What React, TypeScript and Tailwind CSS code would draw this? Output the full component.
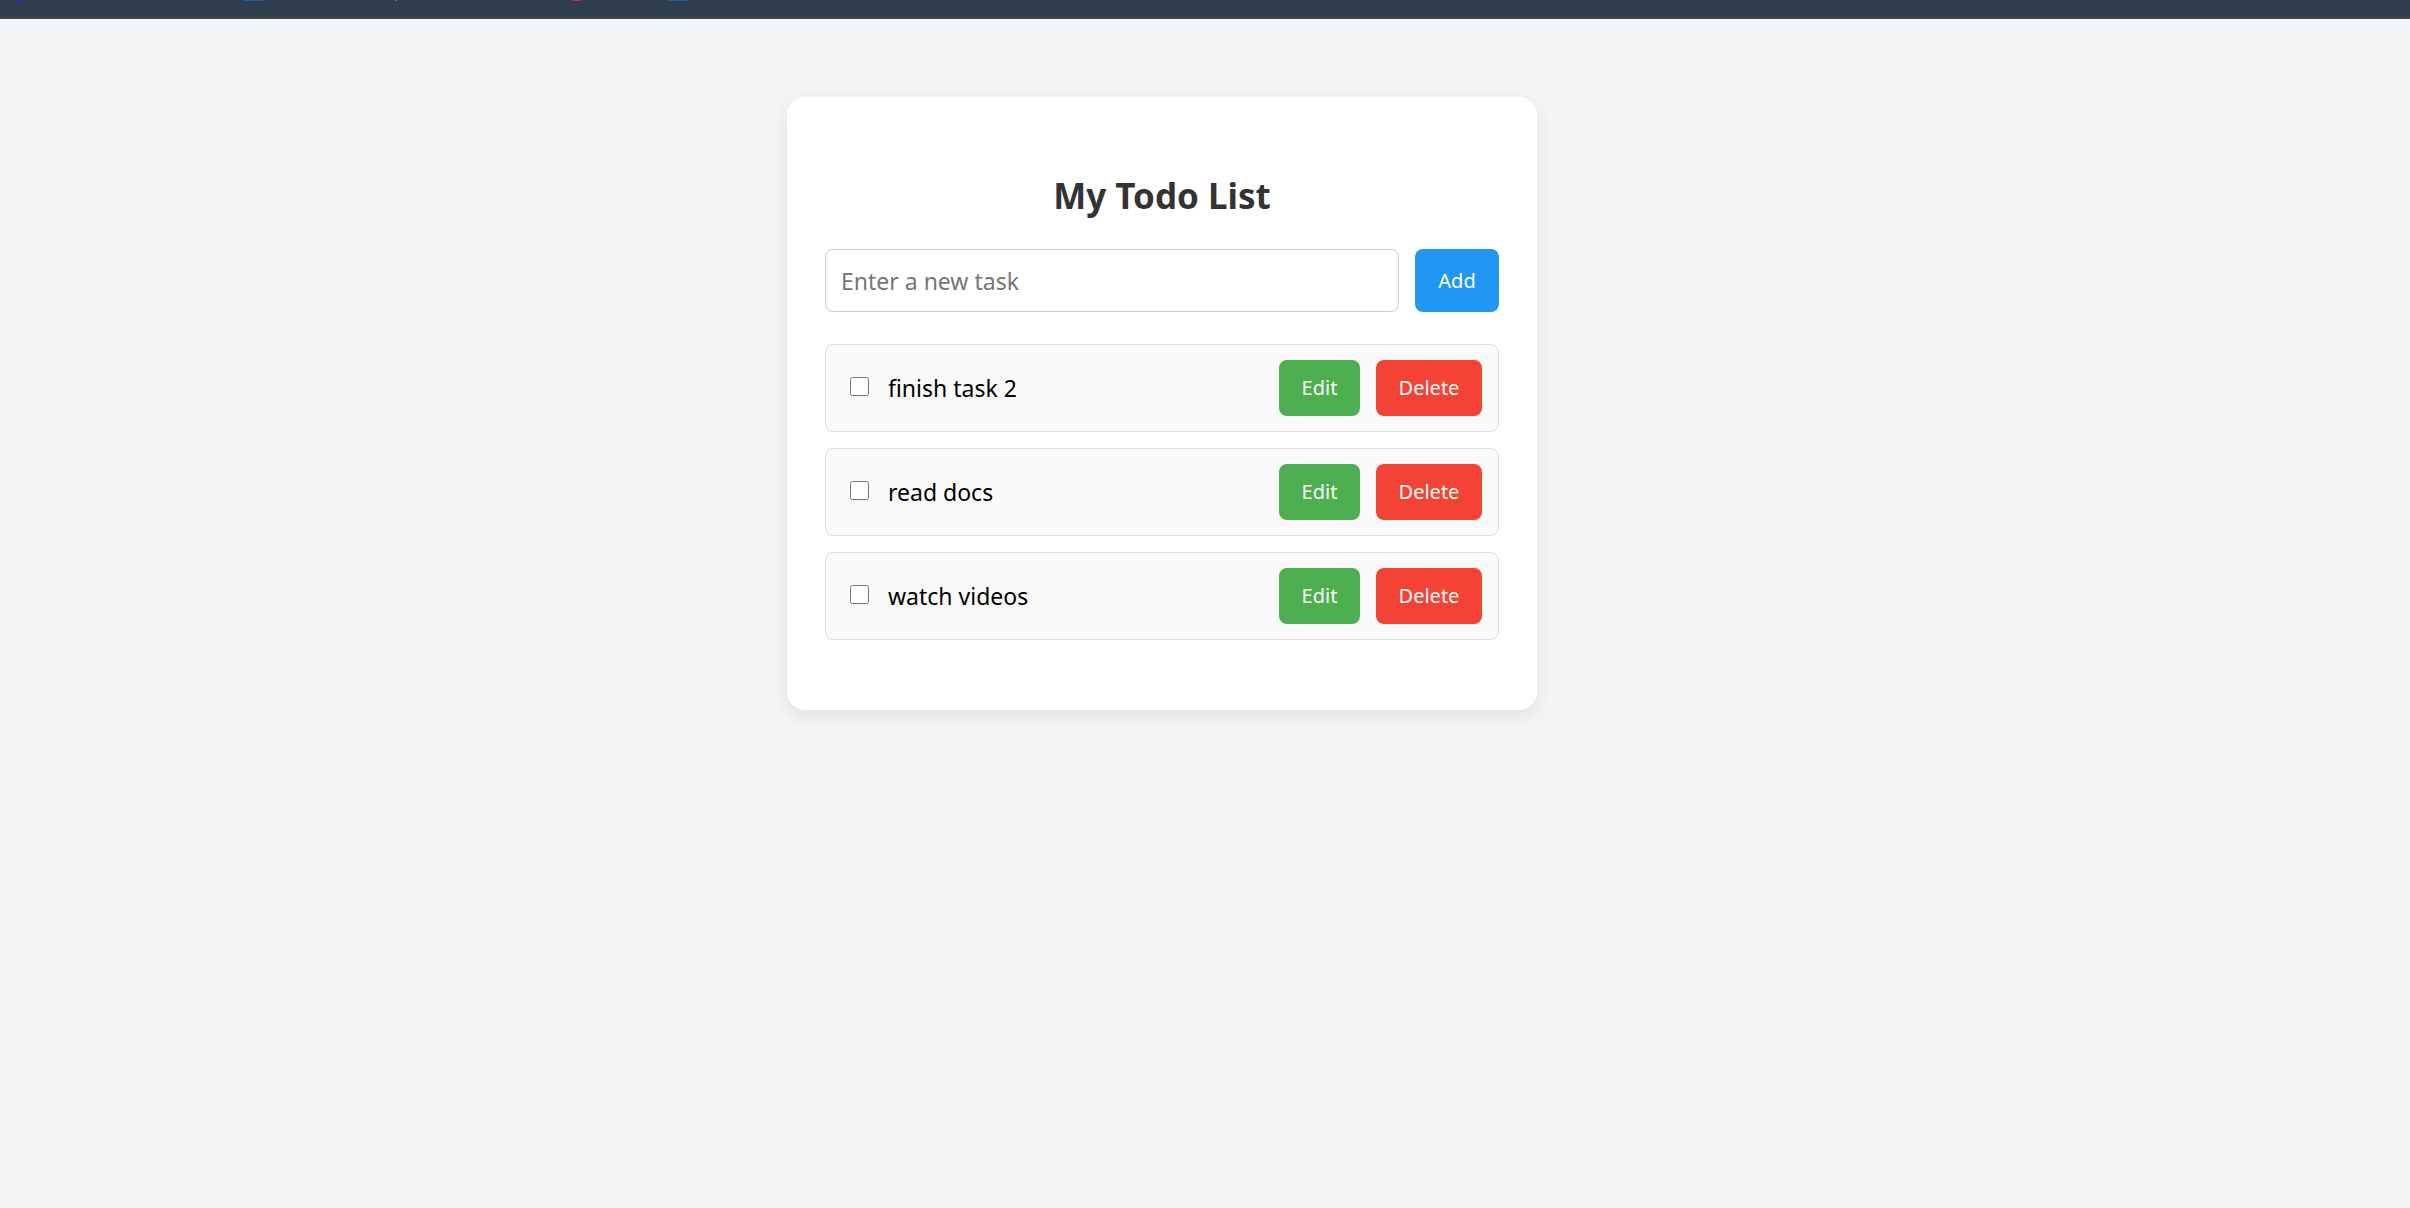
import { useState } from "react";

type Todo = {
  id: number;
  text: string;
  done: boolean;
};

const initialTodos: Todo[] = [
  { id: 1, text: "finish task 2", done: false },
  { id: 2, text: "read docs", done: false },
  { id: 3, text: "watch videos", done: false },
];

export default function App() {
  const [todos, setTodos] = useState<Todo[]>(initialTodos);
  const [draft, setDraft] = useState("");

  const addTodo = () => {
    if (!draft.trim()) return;
    setTodos([...todos, { id: Date.now(), text: draft.trim(), done: false }]);
    setDraft("");
  };

  const toggle = (id: number) =>
    setTodos(todos.map((t) => (t.id === id ? { ...t, done: !t.done } : t)));

  const remove = (id: number) => setTodos(todos.filter((t) => t.id !== id));

  return (
    <div className="min-h-screen bg-[#f4f5f7] font-['Noto_Sans',sans-serif]">
      {/* top bar, with the cut-off bottoms of a few icons */}
      <div className="h-[19px] bg-[#2e3e4c] border-b-2 border-[#3f464b] flex items-start">
        <span className="ml-[16px] w-[7px] h-[1px] bg-[#2222dd]" />
        <span className="ml-[220px] w-[21px] h-[1px] bg-[#1c5ea6]" />
        <span className="ml-[131px] w-[2px] h-[1px] bg-[#6a7480]" />
        <span className="ml-[176px] w-[8px] h-[1px] bg-[#d0207a]" />
        <span className="ml-[86px] w-[21px] h-[1px] bg-[#1c5ea6]" />
      </div>
      {/* card sits a bit left of center in the original */}
      <div className="pt-[78px] pr-[86px] flex justify-center">
        <div className="w-[750px] bg-white rounded-[18px] shadow-[0_6px_20px_rgba(0,0,0,0.09)] px-[38px] pt-[77px] pb-[70px]">
          <h1 className="text-center text-[35px] leading-[44px] font-bold text-[#333333]">My Todo List</h1>
          <div className="flex gap-4 mt-[31px]">
            <input
              className="flex-1 h-[63px] border border-[#cccccc] rounded-[8px] px-[15px] text-[23px] text-[#333] placeholder:text-[#767676] outline-none"
              placeholder="Enter a new task"
              value={draft}
              onChange={(e) => setDraft(e.target.value)}
            />
            <button
              onClick={addTodo}
              className="w-[84px] h-[63px] bg-[#2196f3] text-white text-[20px] rounded-[8px]"
            >
              Add
            </button>
          </div>
          <ul className="mt-[32px] flex flex-col gap-[16px]">
            {todos.map((todo) => (
              <li
                key={todo.id}
                className="h-[88px] bg-[#f9f9f9] border border-[#dddddd] rounded-[8px] flex items-center pl-[24px] pr-[16px]"
              >
                <input
                  type="checkbox"
                  checked={todo.done}
                  onChange={() => toggle(todo.id)}
                  className="w-[19px] h-[19px] m-0 mb-[3px]"
                />
                <span
                  className={
                    "ml-[19px] flex-1 text-[23px] text-black " + (todo.done ? "line-through text-gray-500" : "")
                  }
                >
                  {todo.text}
                </span>
                <button className="w-[81px] h-[56px] bg-[#4caf50] text-white text-[20px] rounded-[8px]">Edit</button>
                <button
                  onClick={() => remove(todo.id)}
                  className="ml-[16px] w-[106px] h-[56px] bg-[#f44336] text-white text-[20px] rounded-[8px]"
                >
                  Delete
                </button>
              </li>
            ))}
          </ul>
        </div>
      </div>
    </div>
  );
}
